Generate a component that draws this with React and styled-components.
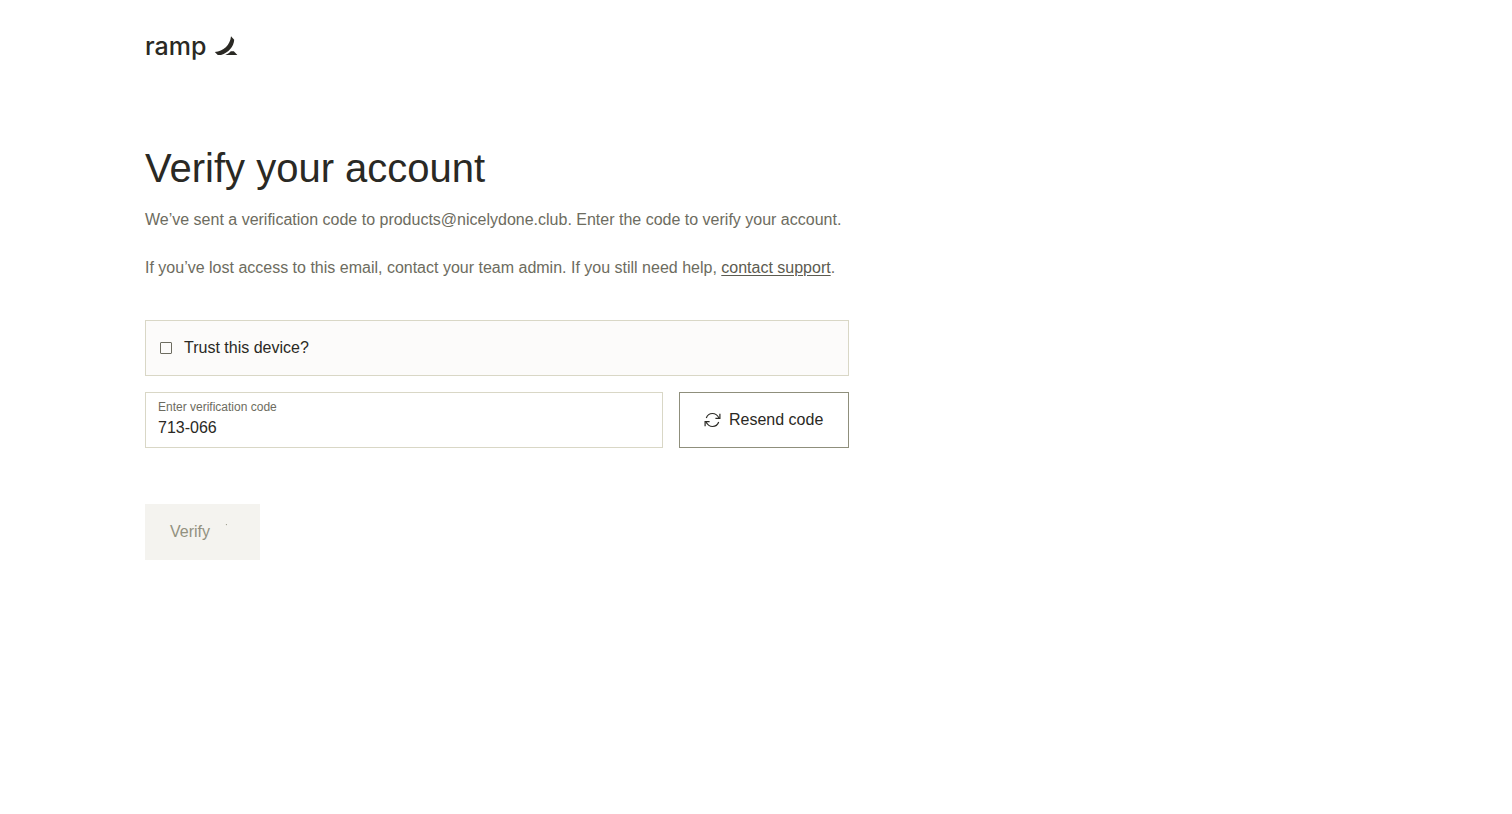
import React, { useState } from "react";
import styled, { createGlobalStyle } from "styled-components";

const GlobalStyle = createGlobalStyle`
  *, *::before, *::after { box-sizing: border-box; }
  body {
    margin: 0;
    background: #fff;
    color: #2a2924;
    font-family: "Liberation Sans", Arial, sans-serif;
    font-size: 16px;
    line-height: 24px;
  }
  svg { flex-shrink: 0; }
`;

const Page = styled.div`
  max-width: 994px;
  padding: 32px 145px 64px;
`;

const Header = styled.header`
  display: flex;
`;

const Logo = styled.a`
  display: flex;
  align-items: center;
  gap: 8px;
  color: #2a2924;
  font-family: Inter, sans-serif;
  font-size: 25px;
  font-weight: 500;
  line-height: 28px;
  text-decoration: none;
`;

const Title = styled.h1`
  margin: 84px 0 16px;
  font-size: 40px;
  font-weight: 400;
  line-height: 48px;
`;

const Text = styled.p`
  margin: 0 0 24px;
  color: #6d6c60;
`;

const SupportLink = styled.a`
  color: #5c5b50;
  text-underline-offset: 2px;
`;

const Form = styled.form`
  display: flex;
  flex-direction: column;
  gap: 16px;
  margin-top: 40px;
`;

const TrustRow = styled.label`
  display: flex;
  align-items: center;
  gap: 12px;
  height: 56px;
  padding: 0 14px;
  border: 1px solid #d9d7c6;
  background: #fcfbfa;
`;

const Checkbox = styled.input`
  appearance: none;
  width: 12px;
  height: 12px;
  margin: 0;
  border: 1px solid #6d6c60;
  border-radius: 1px;
  &:checked { background: #6d6c60; }
`;

const CodeRow = styled.div`
  display: flex;
  gap: 16px;
`;

const Field = styled.label`
  display: flex;
  flex: 1;
  flex-direction: column;
  height: 56px;
  min-width: 0;
  padding: 5px 12px;
  border: 1px solid #d9d7c6;
`;

const FieldLabel = styled.span`
  color: #6d6c60;
  font-size: 12px;
  line-height: 18px;
`;

const CodeInput = styled.input`
  width: 100%;
  height: 24px;
  padding: 0;
  border: 0;
  outline: 0;
  background: transparent;
  color: inherit;
  font: inherit;
`;

const Button = styled.button`
  display: flex;
  align-items: center;
  justify-content: flex-start;
  gap: 8px;
  height: 56px;
  padding: 0 24px;
  border: 1px solid #8f8f7c;
  border-radius: 0;
  background: #fff;
  color: #2a2924;
  font: inherit;
  white-space: nowrap;
`;

const ResendButton = styled(Button)`
  width: 170px;
`;

const VerifyButton = styled(Button)`
  align-self: flex-start;
  width: 115px;
  margin-top: 40px;
  gap: 15px;
  border-color: #f4f3ef;
  background: #f4f3ef;
  color: #929180;
`;

function RampMark() {
  return (
    <svg width="24" height="20" viewBox="0 0 24 20" fill="currentColor" aria-hidden="true">
      <path d="M17 .3 20.2 3.8C19.8 10.5 14.6 16.8 7 19H3.8L.8 16C9.4 15.4 16.2 9 17 .3Z" />
      <path d="M23.4 19H11.2C13.4 18.1 15.2 16.8 16.8 15.2H19.8Z" />
    </svg>
  );
}

function RefreshIcon() {
  return (
    <svg width="17" height="16" viewBox="0 0 17 16" fill="none" stroke="currentColor" strokeWidth="1.2" aria-hidden="true">
      <path d="M2.3 6C3.3 3.2 5.6 1.5 8.5 1.5C11.5 1.5 13.5 3.2 15 6" />
      <path d="M15.9 1.8V6.3H11.4" />
      <path d="M14.7 10C13.7 12.8 11.4 14.5 8.5 14.5C5.5 14.5 3.5 12.8 2 10" />
      <path d="M1.1 14.2V9.7H5.6" />
    </svg>
  );
}

function SpinnerDot() {
  return (
    <svg width="16" height="16" viewBox="0 0 16 16" fill="currentColor" aria-hidden="true">
      <circle cx="1.4" cy=".6" r=".6" />
    </svg>
  );
}

export default function App() {
  const [code, setCode] = useState("713-066");
  return (
    <>
      <GlobalStyle />
      <Page>
        <Header>
          <Logo href="#">
            ramp
            <RampMark />
          </Logo>
        </Header>
        <main>
          <Title>Verify your account</Title>
          <Text>We’ve sent a verification code to products@nicelydone.club. Enter the code to verify your account.</Text>
          <Text>
            If you’ve lost access to this email, contact your team admin. If you still need help,{" "}
            <SupportLink href="#">contact support</SupportLink>.
          </Text>
          <Form onSubmit={(event) => event.preventDefault()}>
            <TrustRow>
              <Checkbox type="checkbox" />
              Trust this device?
            </TrustRow>
            <CodeRow>
              <Field>
                <FieldLabel>Enter verification code</FieldLabel>
                <CodeInput value={code} onChange={(event) => setCode(event.target.value)} />
              </Field>
              <ResendButton type="button">
                <RefreshIcon />
                Resend code
              </ResendButton>
            </CodeRow>
            <VerifyButton type="submit" disabled>
              Verify
              <SpinnerDot />
            </VerifyButton>
          </Form>
        </main>
      </Page>
    </>
  );
}
